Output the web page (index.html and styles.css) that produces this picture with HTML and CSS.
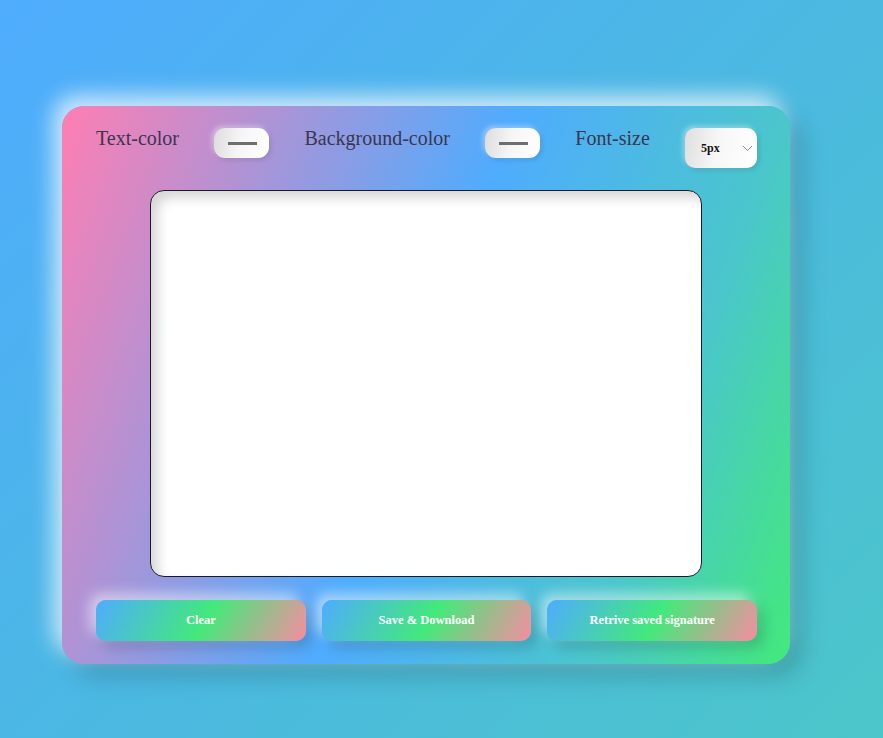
FILE: index.html
```html
<!DOCTYPE html>
<html>
<head>
<meta charset="utf-8">
<link rel="stylesheet" href="styles.css">
</head>
<body>
<div class="card">
  <div class="controls">
    <span class="label">Text-color</span>
    <span class="color-input"><span class="swatch"></span></span>
    <span class="label">Background-color</span>
    <span class="color-input"><span class="swatch"></span></span>
    <span class="label">Font-size</span>
    <span class="select">5px
      <svg class="chev" width="11" height="7" viewBox="0 0 11 7"><path d="M1 1 L5.5 5.5 L10 1" fill="none" stroke="#8a8a8a" stroke-width="1"/></svg>
    </span>
  </div>
  <div class="pad"></div>
  <div class="actions">
    <button class="btn">Clear</button>
    <button class="btn">Save &amp; Download</button>
    <button class="btn">Retrive saved signature</button>
  </div>
</div>
</body>
</html>
```
FILE: styles.css
```css
html, body { margin: 0; height: 100%; }
body {
  background: linear-gradient(135deg, #4facfe 0%, #4bb8e2 50%, #4cc6c9 100%);
  font-family: "Liberation Serif", serif;
  width: 883px;
  height: 738px;
  overflow: hidden;
  padding-top: 106px;
  padding-left: 62px;
  box-sizing: border-box;
}
.card {
  width: 728px;
  height: 558px;
  box-sizing: border-box;
  border-radius: 22px;
  padding: 22px 33px 23px 34px;
  background: linear-gradient(110deg, #ff7eb3 0%, #4facfe 49%, #4ac6cc 78%, #43e97b 100%);
  box-shadow: -8px -10px 22px rgba(255,255,255,0.75), 12px 12px 25px rgba(0,0,0,0.18);
  display: flex;
  flex-direction: column;
}
.controls {
  display: flex;
  justify-content: space-between;
  align-items: flex-start;
  height: 40px;
}
.label {
  font-size: 20px;
  color: #3a3650;
  line-height: 22px;
  margin-top: -1px;
}
.color-input {
  width: 55px;
  height: 30px;
  border-radius: 11px;
  background: linear-gradient(100deg, #dcdcdc 0%, #f5f5f5 45%, #ffffff 100%);
  box-shadow: 2px 2px 5px rgba(0,0,0,0.12), -2px -2px 5px rgba(255,255,255,0.4);
  display: flex;
  align-items: center;
  justify-content: center;
}
.swatch {
  width: 29px;
  height: 3px;
  background: #6e6e6e;
  margin-left: 1px;
}
.select {
  width: 72px;
  height: 40px;
  box-sizing: border-box;
  border-radius: 10px;
  background: linear-gradient(100deg, #dedede 0%, #f7f7f7 45%, #ffffff 100%);
  box-shadow: 2px 2px 5px rgba(0,0,0,0.12), -2px -2px 5px rgba(255,255,255,0.4);
  font-size: 12px;
  font-weight: bold;
  color: #111;
  display: flex;
  align-items: center;
  padding-left: 16px;
  padding-top: 1px;
  position: relative;
}
.chev { position: absolute; right: 4px; top: 17px; }
.pad {
  width: 552px;
  height: 387px;
  box-sizing: border-box;
  margin: 22px 0 23px 54px;
  background: #fff;
  border: 1.5px solid #1a1a26;
  border-radius: 14px;
  box-shadow: inset 7px 7px 12px rgba(0,0,0,0.16);
}
.actions {
  display: flex;
  gap: 16px;
}
.btn {
  flex: 1;
  height: 41px;
  border: none;
  border-radius: 10px;
  background: linear-gradient(120deg, #4facfe 0%, #43e97b 52%, #f78ca0 100%);
  color: #fff;
  font-family: "Liberation Serif", serif;
  font-weight: bold;
  font-size: 12.5px;
  box-shadow: -6px -6px 14px rgba(255,255,255,0.55), 6px 6px 14px rgba(0,0,0,0.18);
  padding: 0;
  line-height: 41px;
}
```
